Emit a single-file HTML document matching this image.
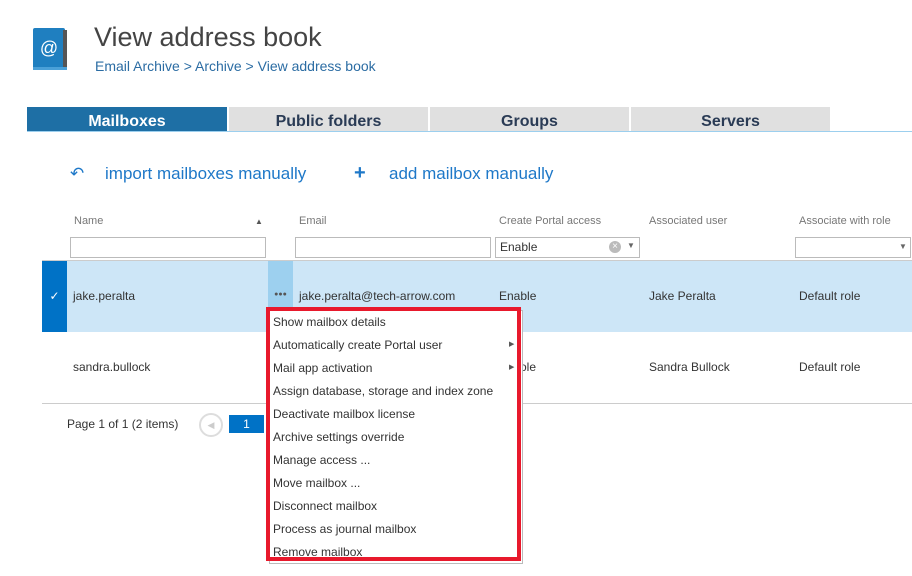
<!DOCTYPE html>
<html><head><style>
body{margin:0;width:912px;height:576px;background:#fff;font-family:"Segoe UI","Liberation Sans",sans-serif;position:relative;overflow:hidden;color:#333}
.a{position:absolute;white-space:nowrap}
.tab{position:absolute;top:107px;height:25px;width:199px;background:#e0e0e0;color:#2a3b55;font-weight:bold;font-size:16px;text-align:center;line-height:29px}
.hd{font-size:11px;color:#777;top:215px}
.inp{position:absolute;top:237px;height:19px;border:1px solid #bbb;background:#fff}
.c{font-size:12px;color:#333}
.mi{position:absolute;left:273px;font-size:12px;color:#333}
</style></head><body>
<svg class="a" style="left:31px;top:27px" width="40" height="46"><rect x="2" y="1" width="32" height="42" rx="2" fill="#1f7fc0"/><rect x="32" y="3" width="4" height="38" fill="#555"/><rect x="2" y="40" width="34" height="3" fill="#4aa0d8"/><text x="18" y="27" font-size="18" fill="#fff" text-anchor="middle" font-family="Liberation Sans">@</text></svg>
<div class="a" style="left:94px;top:22px;font-size:27px;color:#444;font-weight:300">View address book</div>
<div class="a" style="left:95px;top:58px;font-size:14px;color:#2b6ca3">Email Archive &gt; Archive &gt; View address book</div>
<div class="tab" style="left:27px;width:200px;background:#1e6fa5;color:#fff">Mailboxes</div>
<div class="tab" style="left:229px">Public folders</div>
<div class="tab" style="left:430px">Groups</div>
<div class="tab" style="left:631px">Servers</div>
<div class="a" style="left:27px;top:131px;width:885px;height:1px;background:#9ccfee"></div>
<div class="a" style="left:70px;top:164px;font-size:17px;color:#1e78c8">↶</div>
<div class="a" style="left:105px;top:164px;font-size:17px;color:#1e78c8">import mailboxes manually</div>
<div class="a" style="left:354px;top:162px;font-size:20px;color:#1e78c8;font-weight:bold">+</div>
<div class="a" style="left:389px;top:164px;font-size:17px;color:#1e78c8">add mailbox manually</div>
<div class="a hd" style="left:74px">Name</div>
<div class="a" style="left:255px;top:217px;font-size:8px;color:#555">▲</div>
<div class="a hd" style="left:299px">Email</div>
<div class="a hd" style="left:499px">Create Portal access</div>
<div class="a hd" style="left:649px">Associated user</div>
<div class="a hd" style="left:799px">Associate with role</div>
<div class="inp" style="left:70px;width:194px"></div>
<div class="inp" style="left:295px;width:194px"></div>
<div class="inp" style="left:495px;width:143px"><span class="a c" style="left:4px;top:2px">Enable</span><span class="a" style="left:113px;top:3px;width:12px;height:12px;border-radius:6px;background:#bbb;color:#fff;font-size:10px;line-height:12px;text-align:center">×</span><span class="a" style="left:131px;top:3px;font-size:8px;color:#666">▼</span></div>
<div class="inp" style="left:795px;width:114px"><span class="a" style="left:103px;top:4px;font-size:8px;color:#666">▼</span></div>
<div class="a" style="left:42px;top:260px;width:870px;height:1px;background:#ccc"></div>
<div class="a" style="left:42px;top:261px;width:870px;height:71px;background:#cde6f7"></div>
<div class="a" style="left:42px;top:261px;width:25px;height:71px;background:#0072c6;color:#fff;font-size:12px;text-align:center;line-height:71px">✓</div>
<div class="a" style="left:268px;top:261px;width:25px;height:71px;background:#9dd0ef;font-size:7px;text-align:center;line-height:68px;color:#555">●●●</div>
<div class="a c" style="left:73px;top:289px">jake.peralta</div>
<div class="a c" style="left:299px;top:289px">jake.peralta@tech-arrow.com</div>
<div class="a c" style="left:499px;top:289px">Enable</div>
<div class="a c" style="left:649px;top:289px">Jake Peralta</div>
<div class="a c" style="left:799px;top:289px">Default role</div>
<div class="a c" style="left:73px;top:360px">sandra.bullock</div>
<div class="a c" style="left:520px;top:360px">ole</div>
<div class="a c" style="left:649px;top:360px">Sandra Bullock</div>
<div class="a c" style="left:799px;top:360px">Default role</div>
<div class="a" style="left:42px;top:403px;width:870px;height:1px;background:#ccc"></div>
<div class="a c" style="left:67px;top:417px">Page 1 of 1 (2 items)</div>
<div class="a" style="left:199px;top:413px;width:20px;height:20px;border:2px solid #ddd;border-radius:12px;color:#ccc;font-size:9px;text-align:center;line-height:20px">◀</div>
<div class="a" style="left:229px;top:415px;width:35px;height:18px;background:#0072c6;color:#fff;font-size:12px;text-align:center;line-height:18px">1</div>
<div class="a" style="left:269px;top:310px;width:252px;height:252px;background:#fff;border:1px solid #bbb"></div>
<div class="a" style="left:266px;top:307px;width:247px;height:246px;border:4px solid #e8192c"></div>
<div class="mi" style="top:315px">Show mailbox details</div>
<div class="mi" style="top:338px">Automatically create Portal user</div>
<div class="mi" style="top:361px">Mail app activation</div>
<div class="a" style="left:509px;top:340px;font-size:7px;color:#555">▶</div>
<div class="a" style="left:509px;top:363px;font-size:7px;color:#555">▶</div>
<div class="mi" style="top:384px">Assign database, storage and index zone</div>
<div class="mi" style="top:407px">Deactivate mailbox license</div>
<div class="mi" style="top:430px">Archive settings override</div>
<div class="mi" style="top:453px">Manage access ...</div>
<div class="mi" style="top:476px">Move mailbox ...</div>
<div class="mi" style="top:499px">Disconnect mailbox</div>
<div class="mi" style="top:522px">Process as journal mailbox</div>
<div class="mi" style="top:545px">Remove mailbox</div>
</body></html>
